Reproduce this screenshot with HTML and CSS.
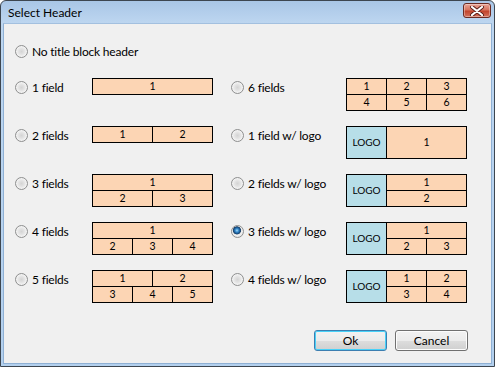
FILE: index.html
```html
<!DOCTYPE html>
<html>
<head>
<meta charset="utf-8">
<title>Select Header</title>
<link rel="stylesheet" href="styles.css">
</head>
<body>
<div class="window">
    <div class="titlebar">
        <span class="title">Select Header</span>
        <span class="close">
            <svg width="16" height="10" viewBox="0 0 16 10">
                <path d="M3 1 L13 9 M13 1 L3 9" stroke="#5a1e18" stroke-width="4" stroke-linecap="round"/>
                <path d="M3 1 L13 9 M13 1 L3 9" stroke="#fff" stroke-width="2.2" stroke-linecap="round"/>
            </svg>
        </span>
    </div>
    <div class="client">
        <label class="opt first"><span class="radio"></span><span class="txt">No title block header</span></label>

        <div class="options">
            <!-- left column -->
            <div class="item">
                <label class="opt left"><span class="radio"></span><span class="txt">1 field</span></label>
                <div class="diagram">
                    <span class="s6">1</span>
                </div>
            </div>
            <div class="item">
                <label class="opt right"><span class="radio"></span><span class="txt">6 fields</span></label>
                <div class="diagram">
                    <span class="s2">1</span><span class="s2">2</span><span class="s2">3</span>
                    <span class="s2">4</span><span class="s2">5</span><span class="s2">6</span>
                </div>
            </div>

            <div class="item">
                <label class="opt left"><span class="radio"></span><span class="txt">2 fields</span></label>
                <div class="diagram">
                    <span class="s3">1</span><span class="s3">2</span>
                </div>
            </div>
            <div class="item">
                <label class="opt right"><span class="radio"></span><span class="txt">1 field w/ logo</span></label>
                <div class="diagram">
                    <span class="logo s2 r2">LOGO</span>
                    <span class="s4 r2">1</span>
                </div>
            </div>

            <div class="item">
                <label class="opt left"><span class="radio"></span><span class="txt">3 fields</span></label>
                <div class="diagram">
                    <span class="s6">1</span>
                    <span class="s3">2</span><span class="s3">3</span>
                </div>
            </div>
            <div class="item">
                <label class="opt right"><span class="radio"></span><span class="txt">2 fields w/ logo</span></label>
                <div class="diagram">
                    <span class="logo s2 r2">LOGO</span>
                    <span class="s4">1</span>
                    <span class="s4">2</span>
                </div>
            </div>

            <div class="item">
                <label class="opt left"><span class="radio"></span><span class="txt">4 fields</span></label>
                <div class="diagram">
                    <span class="s6">1</span>
                    <span class="s2">2</span><span class="s2">3</span><span class="s2">4</span>
                </div>
            </div>
            <div class="item">
                <label class="opt right"><span class="radio on"></span><span class="txt">3 fields w/ logo</span></label>
                <div class="diagram">
                    <span class="logo s2 r2">LOGO</span>
                    <span class="s4">1</span>
                    <span class="s2">2</span><span class="s2">3</span>
                </div>
            </div>

            <div class="item">
                <label class="opt left"><span class="radio"></span><span class="txt">5 fields</span></label>
                <div class="diagram">
                    <span class="s3">1</span><span class="s3">2</span>
                    <span class="s2">3</span><span class="s2">4</span><span class="s2">5</span>
                </div>
            </div>
            <div class="item">
                <label class="opt right"><span class="radio"></span><span class="txt">4 fields w/ logo</span></label>
                <div class="diagram">
                    <span class="logo s2 r2">LOGO</span>
                    <span class="s2">1</span><span class="s2">2</span>
                    <span class="s2">3</span><span class="s2">4</span>
                </div>
            </div>
        </div>

        <div class="buttons">
            <button class="btn default">Ok</button>
            <button class="btn">Cancel</button>
        </div>
    </div>
</div>
</body>
</html>
```

FILE: styles.css
```css
*{margin:0; padding:0; box-sizing:border-box;}
body{background:#fff; font-family:Lato,"Noto Sans",sans-serif; font-size:12px; color:#000;}

.window{width:495px; height:367px; display:flex; flex-direction:column; border:1px solid #3d4650; border-radius:6px 6px 0 0; background:linear-gradient(#a9c6e6, #bdd6f0 22px, #b3d0ee); padding:0 2px 2px 2px;}
.titlebar{height:22px; display:flex; align-items:center; justify-content:space-between; padding:0 1px 0 5px;}
.title{font-size:12px; color:#000;}
.close{width:28px; height:15px; margin-top:-3px; border:1px solid #6b2a22; border-radius:3px; background:linear-gradient(#e8a496, #d6735f 45%, #c2442c 55%, #d2715c); display:flex; align-items:center; justify-content:center; box-shadow:inset 0 0 0 1px rgba(255,255,255,0.35);}

.client{flex:1; background:#f0f0f0; border:1px solid #8fb0d4; border-top-color:#a3c0df; padding:18px 23px 0 11px; display:flex; flex-direction:column;}

.opt{display:flex; align-items:flex-start; line-height:18px; white-space:nowrap; color:#000; flex:none;}
.opt.first{height:18px;}
.opt.left{width:77px;}
.opt.right{width:115px;}
.radio{width:13px; height:13px; margin-top:3px; margin-right:4px; border-radius:50%; border:1px solid #8e8f8f; background:radial-gradient(circle at 50% 50%, #d4d4d4 0, #e4e4e4 3px, #f2f2f2 5px, #e8e8e8 6px); flex:none;}
.radio.on{background:radial-gradient(circle at 45% 40%, #a8dcf8 0, #3b8fd0 1.6px, #174f86 3.2px, #24466a 3.8px, #e0e0e0 4.3px, #f2f2f2 5px, #e8e8e8 6px);}
.txt{font-size:12px; letter-spacing:-0.2px; padding-top:1px;}

.options{margin-top:19px; display:grid; grid-template-columns:216px 236px; grid-auto-rows:48px;}
.item{display:flex; align-items:flex-start; margin-top:-1px;}

.diagram{width:121px; flex:none; display:grid; grid-template-columns:repeat(6, 1fr); grid-auto-rows:15px; gap:1px; padding:1px; background:#000;}
.diagram span{background:#fcd5b4; font-size:10.5px; line-height:15px; text-align:center; color:#000;}
.diagram .logo{background:#b7dee8; font-size:10px;}
.s2{grid-column:span 2;}
.s3{grid-column:span 3;}
.s4{grid-column:span 4;}
.s6{grid-column:span 6;}
.r2{grid-row:span 2; display:flex; align-items:center; justify-content:center;}

.buttons{display:flex; justify-content:flex-end; gap:8px; margin-top:11px;}
.btn{width:73px; height:21px; font-family:inherit; font-size:12px; color:#000; border:1px solid #707070; border-radius:3px; background:linear-gradient(#f2f2f2, #ebebeb 50%, #dddddd 51%, #cfcfcf); box-shadow:inset 0 0 0 1px #fcfcfc;}
.btn.default{border-color:#3c7fb1; box-shadow:inset 0 0 0 1px #48d1f8;}
```
